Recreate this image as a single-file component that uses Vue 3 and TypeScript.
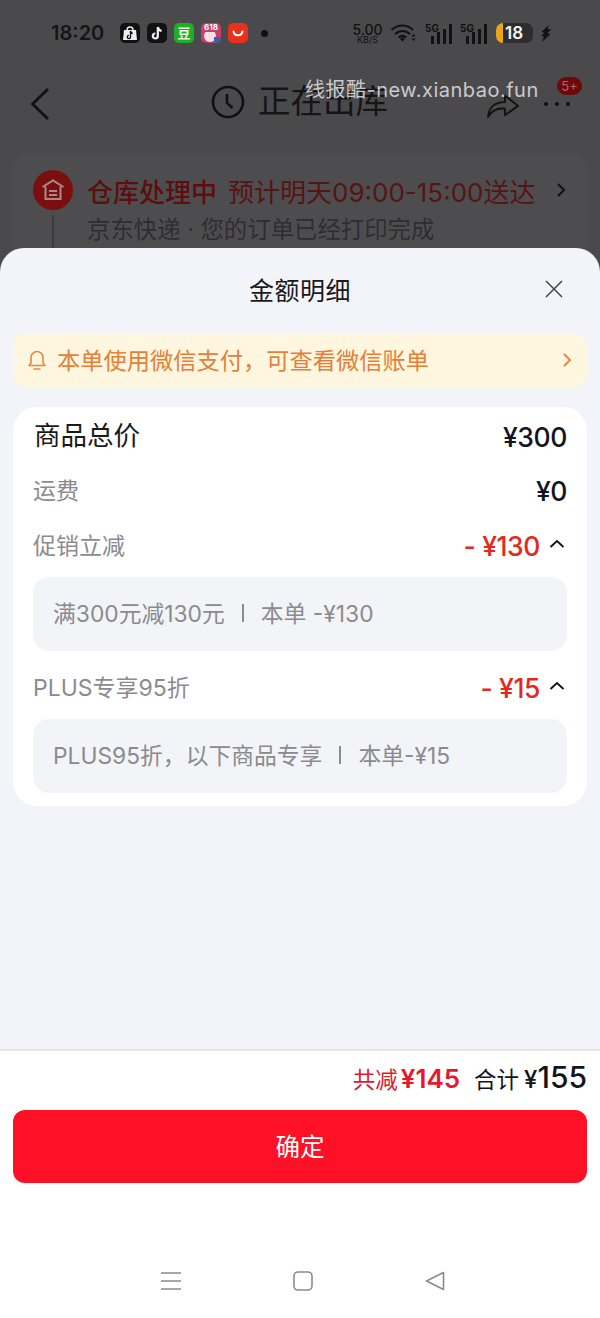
<script setup lang="ts">
interface Row {
  label: string
  amount: string
  open?: boolean
  note?: string
}

const rows: Row[] = [
  { label: '运费', amount: '¥0' },
  { label: '促销立减', amount: '- ¥130', open: true, note: '满300元减130元|本单 -¥130' },
  { label: 'PLUS专享95折', amount: '- ¥15', open: true, note: 'PLUS95折，以下商品专享|本单-¥15' },
]
</script>

<template>
  <div class="page">
    <div class="back">
      <div class="status">
        <span class="time">18:20</span>
        <div class="apps">
          <i class="app a1"><svg viewBox="0 0 20 20"><path d="M4 7h12l1 10H3z" fill="#eee"/><path d="M7 7a3 3 0 0 1 6 0" fill="none" stroke="#eee" stroke-width="1.4"/><path d="M10.500 8v6a1.600 1.600 0 1 1-1.600-1.600M10.500 8c.3 1.400 1 2 2.200 2.200" fill="none" stroke="#111" stroke-width="1.400"/></svg></i>
          <i class="app a2"><svg viewBox="0 0 20 20"><path d="M10.800 4v9a2.500 2.500 0 1 1-2.500-2.500M10.800 4c.4 2.300 1.700 3.500 3.800 3.800" fill="none" stroke="#f2f2f2" stroke-width="2.200"/></svg></i>
          <i class="app a3">豆</i>
          <i class="app a4">618<svg viewBox="0 0 20 12"><circle cx="9" cy="4" r="6" fill="#f3dfe4"/><rect x="13" y="5" width="7" height="7" fill="#4a5aa8"/></svg></i>
          <i class="app a5"><svg viewBox="0 0 20 20"><path d="M5.500 8.500c1 5 8 5 9 0" fill="none" stroke="#fff" stroke-width="2" stroke-linecap="round"/></svg></i>
        </div>
        <i class="dot"></i>
        <div class="indicators">
          <div class="speed"><b>5.00</b><small>KB/S</small></div>
          <svg class="wifi" width="28" height="20" viewBox="0 0 28 20">
            <path d="M1.500 7C8 1 17 1 23 7M5 11c4.500-4 10.500-4 15 0M8.500 14.500c2.500-2 5.500-2 8 0" fill="none" stroke="#111" stroke-width="2.200"/>
            <path d="M10 16l2.500-2.200L15 16l-2.500 2.500z" fill="#111"/>
            <path d="M23.500 11l2 2.500h-4zM23.500 18l-2-2.500h4z" fill="#111"/>
          </svg>
          <div class="signal"><em>5G</em><i class="b1"></i><i class="b2"></i><i class="b3"></i><i class="b4"></i></div>
          <div class="signal"><em>5G</em><i class="b1"></i><i class="b2"></i><i class="b3"></i><i class="b4"></i></div>
          <div class="battery"><i></i><span>18</span></div>
          <svg width="12" height="17" viewBox="0 0 12 17"><path d="M9 0L1.500 7l3 .5L1 11l3 .3L2 17l8.500-8-3.200-.4L11 4.500 7.500 4z" fill="#111"/></svg>
        </div>
      </div>

      <div class="nav">
        <svg class="nav-back" width="22" height="34" viewBox="0 0 22 34"><path d="M19 2L3.500 17 19 32" fill="none" stroke="#111" stroke-width="2.800"/></svg>
        <div class="nav-title">
          <svg width="34" height="34" viewBox="0 0 34 34"><circle cx="17" cy="17" r="15" fill="none" stroke="#111" stroke-width="2.600"/><path d="M16 9v9l5.500 5" fill="none" stroke="#111" stroke-width="2.600"/></svg>
          <span>正在出库</span>
        </div>
        <div class="nav-actions">
          <svg width="34" height="30" viewBox="0 0 36 32"><path d="M2 30C3 19 10 14 20 14V7l14 11-14 10v-7C12 20 6 23 2 30z" fill="none" stroke="#111" stroke-width="2" stroke-linejoin="round"/></svg>
          <div class="more"><i></i><i></i><i></i><span class="badge">5+</span></div>
        </div>
      </div>

      <div class="order">
        <div class="order-icon">
          <svg width="26" height="26" viewBox="0 0 26 26"><path d="M2.500 10L13 3.500 23.500 10M5.500 9.500V22h15V9.500M9 14h8M9 18h8" fill="none" stroke="#a98a8a" stroke-width="2"/></svg>
        </div>
        <div class="order-text">
          <div class="order-head"><b>仓库处理中</b><span>预计明天09:00-15:00送达</span></div>
          <div class="order-sub">京东快递 · 您的订单已经打印完成</div>
        </div>
        <svg class="order-arrow" width="10" height="16" viewBox="0 0 10 16"><path d="M2 2l6 6-6 6" fill="none" stroke="#111" stroke-width="2"/></svg>
      </div>
    </div>

    <div class="sheet">
      <header class="sheet-head">
        <h1>金额明细</h1>
        <svg class="close" width="18" height="18" viewBox="0 0 18 18"><path d="M1 1l16 16M17 1L1 17" fill="none" stroke="#444" stroke-width="1.500"/></svg>
      </header>

      <div class="notice">
        <svg width="20" height="22" viewBox="0 0 20 22"><path d="M2 16.500h16l-2-2.500V8.500a6 6 0 0 0-12 0V14zM7 20h6" fill="none" stroke="#e8893f" stroke-width="1.600" stroke-linejoin="round" stroke-linecap="round"/></svg>
        <span>本单使用微信支付，可查看微信账单</span>
        <svg class="notice-arrow" width="10" height="16" viewBox="0 0 10 16"><path d="M2 2l6 6-6 6" fill="none" stroke="#e8893f" stroke-width="2"/></svg>
      </div>

      <section class="card">
        <div class="line total">
          <span class="label">商品总价</span>
          <span class="amount">¥300</span>
        </div>
        <template v-for="row in rows" :key="row.label">
          <div class="line">
            <span class="label muted">{{ row.label }}</span>
            <span class="amount" :class="{ minus: row.open }">
              <span>{{ row.amount }}</span>
              <svg v-if="row.open" width="16" height="10" viewBox="0 0 16 10"><path d="M1.500 8L8 2l6.500 6" fill="none" stroke="#111" stroke-width="1.800"/></svg>
            </span>
          </div>
          <div v-if="row.note" class="note">
            <span>{{ row.note.split('|')[0] }}</span>
            <i></i>
            <span>{{ row.note.split('|')[1] }}</span>
          </div>
        </template>
      </section>

      <footer class="foot">
        <div class="sum">
          <span class="cut">共减<b>¥145</b></span>
          <span class="all">合计<b>¥<em>155</em></b></span>
        </div>
        <button type="button" class="ok">确定</button>
        <div class="keys">
          <svg width="20" height="18" viewBox="0 0 20 18"><path d="M0 1h20M0 9h20M0 17h20" stroke="#8a8a8a" stroke-width="1.500"/></svg>
          <svg width="20" height="20" viewBox="0 0 20 20"><rect x="1" y="1" width="18" height="18" rx="4" fill="none" stroke="#8a8a8a" stroke-width="1.600"/></svg>
          <svg width="20" height="20" viewBox="0 0 20 20"><path d="M1.500 10L18.500 1.500v17z" fill="none" stroke="#8a8a8a" stroke-width="1.600" stroke-linejoin="round"/></svg>
        </div>
      </footer>
    </div>

    <div class="mark">线报酷-new.xianbao.fun</div>
  </div>
</template>

<style>
html,
body {
  margin: 0;
  background: #fff;
}
</style>

<style scoped>
.page {
  position: relative;
  width: 600px;
  height: 1318px;
  overflow: hidden;
  display: flex;
  flex-direction: column;
  font-family: Inter, "Noto Sans CJK SC", sans-serif;
  color: #111;
}

.back {
  height: 272px;
  flex: none;
  background: #4a4a4c;
  overflow: hidden;
}

.status {
  display: flex;
  align-items: center;
  height: 24px;
  margin-top: 21px;
  padding-left: 51px;
}
.time {
  font-size: 20px;
  font-weight: 600;
  color: #151515;
  width: 69px;
}
.apps {
  display: flex;
  gap: 7px;
}
.app {
  width: 20px;
  height: 20px;
  border-radius: 5px;
  display: block;
  font-style: normal;
  text-align: center;
  overflow: hidden;
}
.a1,
.a2 { background: #111; }
.a3 { background: #1daf24; color: #e8f5e0; font-size: 13px; font-weight: 700; line-height: 20px; }
.a4 { background: #c2416f; color: #fff; font-size: 8px; font-weight: 700; line-height: 9px; }
.a5 { background: #e8301b; }
.dot {
  width: 7px;
  height: 7px;
  background: #111;
  border-radius: 50%;
  margin-left: 13px;
}
.indicators {
  display: flex;
  align-items: center;
  margin-left: 83px;
  color: #111;
}
.speed {
  display: flex;
  flex-direction: column;
  align-items: center;
  width: 33px;
}
.speed b {
  font-size: 14px;
  font-weight: 500;
  line-height: 13px;
}
.speed small {
  font-size: 9px;
  line-height: 8px;
}
.wifi { margin-left: 6px; }
.signal {
  position: relative;
  display: flex;
  align-items: flex-end;
  gap: 3px;
  width: 27px;
  height: 21px;
  margin-left: 7px;
  box-sizing: border-box;
  justify-content: flex-end;
}
.signal + .signal { margin-left: 8px; }
.signal em {
  position: absolute;
  left: 0;
  top: 0;
  font-size: 10px;
  font-weight: 700;
  font-style: normal;
  line-height: 10px;
}
.signal i {
  display: block;
  width: 3px;
  background: #111;
}
.b1 { height: 8px; }
.b2 { height: 12px; }
.b3 { height: 15px; }
.b4 { height: 20px; }
.battery {
  position: relative;
  width: 37px;
  height: 20px;
  border-radius: 7px;
  background: #2d2d2f;
  margin-left: 9px;
  margin-right: 7px;
  overflow: hidden;
}
.battery i {
  position: absolute;
  left: 0;
  top: 0;
  width: 7px;
  height: 20px;
  background: #eaa51c;
}
.battery span {
  position: absolute;
  left: 9px;
  top: 0;
  font-size: 17px;
  font-weight: 600;
  line-height: 20px;
  color: #f4f4f4;
}

.nav {
  position: relative;
  display: flex;
  align-items: center;
  justify-content: space-between;
  height: 48px;
  margin-top: 35px;
  padding: 0 30px 0 29px;
}
.nav-title {
  position: absolute;
  left: 211px;
  top: 4px;
  display: flex;
  align-items: center;
  gap: 13px;
}
.nav-title span {
  font-size: 32.500px;
  line-height: 36px;
  color: #151515;
}
.nav-actions {
  display: flex;
  align-items: center;
  gap: 24px;
}
.more {
  position: relative;
  display: flex;
  gap: 7px;
}
.more i {
  display: block;
  width: 4px;
  height: 4px;
  border-radius: 50%;
  background: #111;
}
.badge {
  position: absolute;
  right: -12px;
  top: -25px;
  width: 25px;
  height: 18px;
  border-radius: 9px;
  background: #6f0808;
  color: #a06a6a;
  font-size: 13px;
  line-height: 18px;
  text-align: center;
}

.order {
  display: flex;
  gap: 14px;
  height: 120px;
  margin: 25px 13px 0;
  padding: 17px 21px 0 20px;
  border-radius: 18px;
  background: #4d4d4f;
  box-sizing: border-box;
  position: relative;
}
.order-icon {
  width: 40px;
  height: 40px;
  flex: none;
  border-radius: 50%;
  background: #7b0f0f;
  display: flex;
  align-items: center;
  justify-content: center;
  position: relative;
}
.order-icon::after {
  content: "";
  position: absolute;
  left: 19px;
  top: 45px;
  width: 2px;
  height: 40px;
  background: #3a3a3c;
}
.order-text {
  flex: 1;
  min-width: 0;
  white-space: nowrap;
}
.order-head {
  display: flex;
  gap: 11px;
  height: 40px;
  align-items: center;
  color: #561414;
  font-size: 26px;
}
.order-head b {
  font-size: 26px;
  font-weight: 500;
  color: #5e0e0e;
}
.order-sub {
  margin-top: 3px;
  font-size: 23.400px;
  line-height: 34px;
  color: #2e2e30;
}
.order-arrow {
  margin-top: 12px;
  position: absolute;
  right: 21px;
}

.sheet {
  flex: 1;
  display: flex;
  flex-direction: column;
  margin-top: -24px;
  background: #f2f4f9;
  border-radius: 24px 24px 0 0;
  position: relative;
  min-height: 0;
}
.sheet-head {
  position: relative;
  height: 85px;
  flex: none;
}
.sheet-head h1 {
  margin: 0;
  padding-top: 25px;
  text-align: center;
  font-size: 25px;
  font-weight: 400;
  line-height: 37px;
  letter-spacing: 0.500px;
  color: #1a1a1a;
}
.close {
  position: absolute;
  right: 37px;
  top: 32px;
}
.notice {
  display: flex;
  align-items: center;
  height: 54px;
  margin: 0 13px;
  padding: 0 15px 0 14px;
  border-radius: 14px;
  background: #fff6df;
  color: #e57f38;
  font-size: 23.250px;
}
.notice span {
  flex: 1;
  margin-left: 10px;
  padding-bottom: 2px;
}
.card {
  margin: 20px 13px 0;
  padding: 8px 20px 13px;
  background: #fff;
  border-radius: 24px;
  box-sizing: border-box;
  height: 399px;
}
.line {
  display: flex;
  align-items: center;
  justify-content: space-between;
  height: 40px;
  margin-top: 15px;
}
.total {
  margin-top: 0;
}
.note + .line {
  margin-top: 16px;
}
.label {
  font-size: 26.500px;
  margin-left: 1px;
  padding-bottom: 3px;
  color: #1a1a1a;
}
.muted {
  margin-left: 0;
  font-size: 23px;
  color: #8b8b8f;
}
.amount {
  padding-top: 1px;
  font-size: 26.500px;
  font-weight: 500;
  letter-spacing: -0.400px;
  color: #14151a;
  display: inline-flex;
  align-items: center;
  gap: 9px;
}
.total .amount {
  padding-top: 3px;
}
.amount svg {
  margin-top: -4px;
  margin-right: 2px;
}
.minus {
  color: #e5281f;
}
.note {
  display: flex;
  align-items: center;
  height: 74px;
  margin-top: 12px;
  padding: 0 20px 3px;
  box-sizing: border-box;
  border-radius: 16px;
  background: #f3f4f8;
  color: #8b8b8f;
  font-size: 22.800px;
  white-space: nowrap;
}
.note i {
  display: block;
  width: 2px;
  height: 18px;
  margin: 0 17px;
  background: #8b8b8f;
}

.foot {
  position: absolute;
  left: 0;
  right: 0;
  bottom: 0;
  height: 269px;
  background: #fff;
  border-top: 2px solid #e6e7ea;
  box-sizing: border-box;
  padding: 0 13px;
}
.sum {
  display: flex;
  justify-content: flex-end;
  align-items: baseline;
  gap: 14px;
  height: 56px;
  line-height: 52px;
}
.cut {
  font-size: 22.500px;
  color: #d91c30;
}
.cut b {
  font-size: 26px;
  font-weight: 600;
  color: #e8162e;
  margin-left: 3px;
}
.all {
  font-size: 22.500px;
  color: #14151a;
}
.all b {
  font-size: 24px;
  font-weight: 500;
  margin-left: 5px;
}
.all em {
  font-size: 30px;
  font-style: normal;
}
.ok {
  display: block;
  width: 100%;
  height: 73px;
  margin-top: 3px;
  padding: 0 0 2px;
  border: none;
  border-radius: 12px;
  background: #fe1126;
  color: #fff;
  font-family: inherit;
  font-size: 24.500px;
}
.keys {
  position: absolute;
  left: 161px;
  right: 155px;
  top: 220px;
  display: flex;
  justify-content: space-between;
  align-items: center;
}

.mark {
  position: absolute;
  left: 305px;
  top: 77px;
  font-size: 20px;
  line-height: 26px;
  letter-spacing: 0.500px;
  color: rgba(255, 255, 255, 0.72);
  white-space: nowrap;
}
</style>
